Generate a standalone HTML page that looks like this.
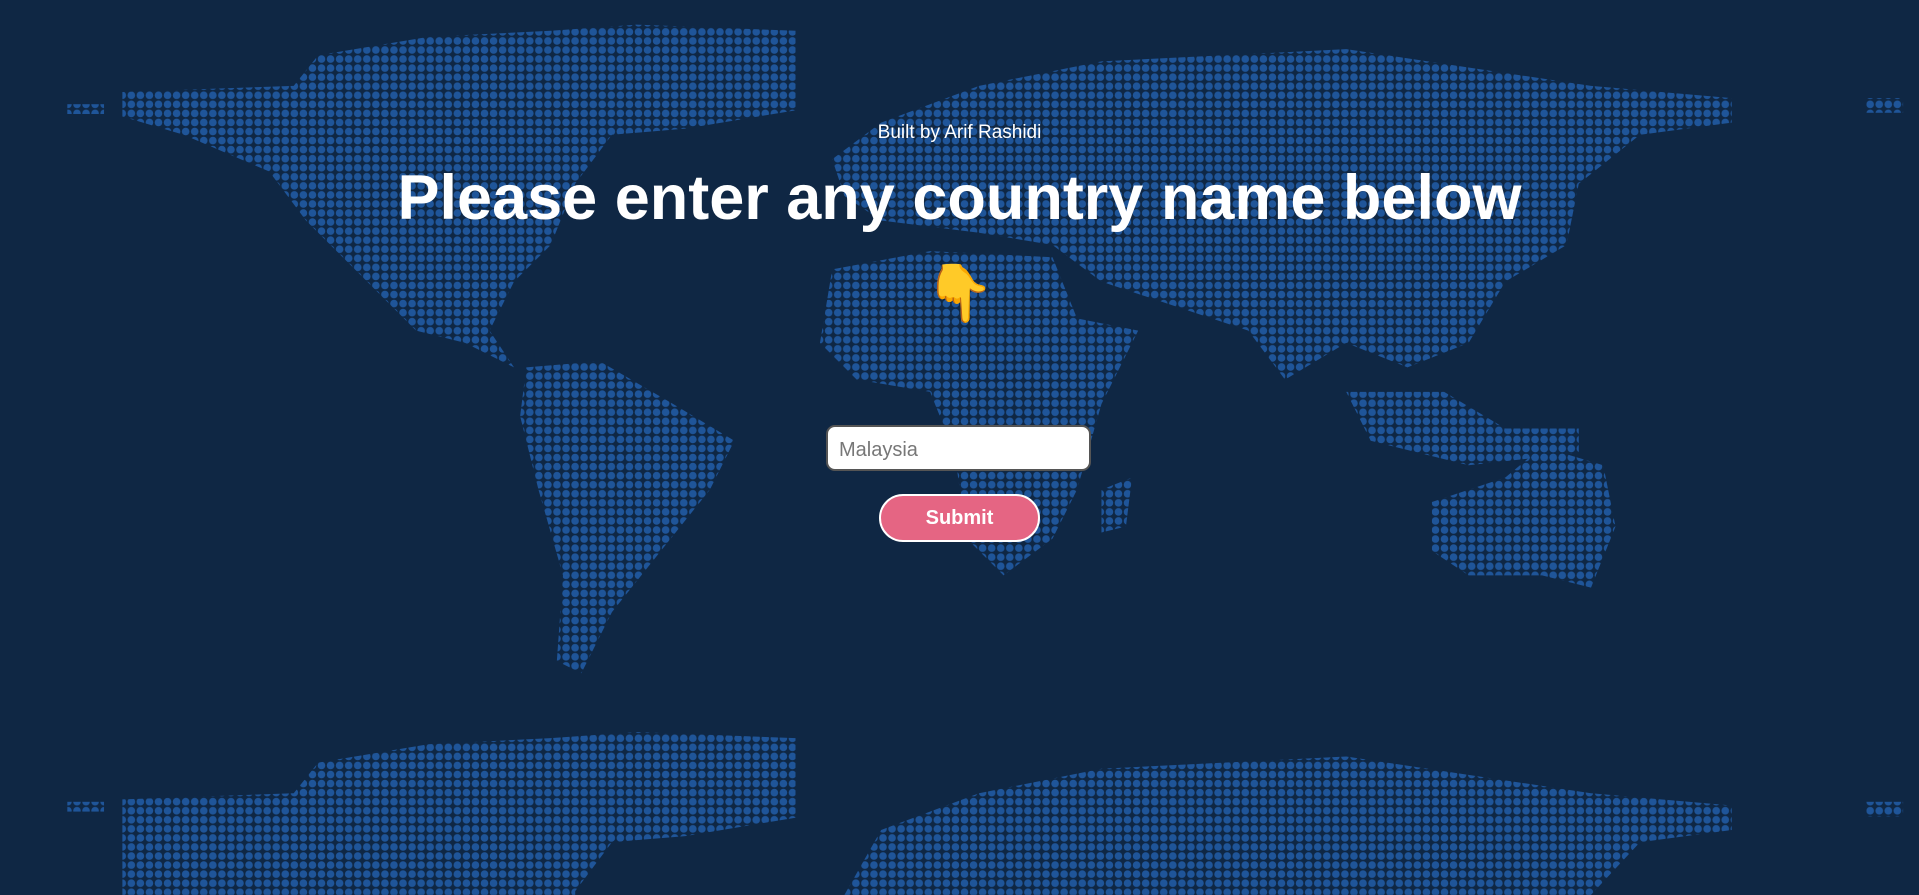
<!DOCTYPE html>
<html><head><meta charset="utf-8"><style>
html,body{margin:0;padding:0;width:1919px;height:895px;overflow:hidden;background:#0f2744;font-family:"Liberation Sans",sans-serif}
svg.map{position:absolute;left:0;top:0}
.c{position:absolute;left:0;width:1919px;text-align:center;color:#fff}
#by{top:122px;font-size:19px}
#h{top:162px;font-size:63px;font-weight:bold}
#hand{top:265px;font-size:56px;line-height:1}
#inp{position:absolute;left:826px;top:425px;width:265px;height:46px;border:2px solid #555;border-radius:9px;background:#fff;box-sizing:border-box;font-size:20px;color:#777;padding:12px 11px}
#btn{position:absolute;left:879px;top:494px;width:161px;height:48px;border:2px solid #fff;border-radius:25px;background:#e56583;box-sizing:border-box;color:#fff;font-weight:bold;font-size:20px;text-align:center;line-height:44px}
</style></head><body>
<svg class="map" width="1919" height="895" viewBox="0 0 1568 731">
<defs>
<pattern id="d" width="7.4" height="7.4" patternUnits="userSpaceOnUse"><circle cx="3.7" cy="3.7" r="3.1" fill="#1f5599"/></pattern>
</defs>
<g fill="url(#d)">
<polygon points="100,75 240,70 260,45 350,30 450,25 520,20 650,25 650,90 560,105 500,110 470,150 450,200 420,230 400,270 420,300 380,280 340,270 300,230 250,180 220,140 150,110 100,95"/>
<polygon points="430,300 490,295 550,330 600,360 580,400 540,450 500,500 475,550 455,540 460,470 440,400 425,340"/>
<polygon points="680,130 720,100 800,70 900,50 1000,45 1100,40 1300,70 1415,80 1415,100 1340,110 1290,150 1280,200 1230,230 1200,280 1150,300 1100,280 1050,310 1020,270 960,250 900,230 860,200 800,190 720,180 690,160"/>
<polygon points="680,220 760,205 860,210 880,260 930,270 900,330 880,400 860,440 820,470 790,440 780,370 760,320 700,310 670,280"/>
<polygon points="1170,410 1230,390 1260,365 1310,380 1320,430 1300,480 1260,470 1200,470 1170,450"/>
<polygon points="1100,320 1180,320 1230,350 1290,350 1290,370 1200,380 1120,360"/>
<polygon points="900,400 925,390 920,430 900,435"/>
<rect x="55" y="85" width="30" height="8"/><rect x="1525" y="80" width="30" height="12"/>
</g>
<g fill="url(#d)">
<polygon points="100,653 240,648 260,623 350,608 450,603 520,598 650,603 650,668 560,683 500,688 470,728 470,731 100,731"/>
<polygon points="690,731 720,678 800,648 900,628 1000,623 1100,618 1300,648 1415,658 1415,678 1340,688 1300,731"/>
<rect x="55" y="655" width="30" height="8"/><rect x="1525" y="655" width="30" height="12"/>
</g>
</svg>
<div class="c" id="by">Built by Arif Rashidi</div>
<div class="c" id="h">Please enter any country name below</div>
<div class="c" id="hand">👇</div>
<div id="inp">Malaysia</div>
<div id="btn">Submit</div>
</body></html>
